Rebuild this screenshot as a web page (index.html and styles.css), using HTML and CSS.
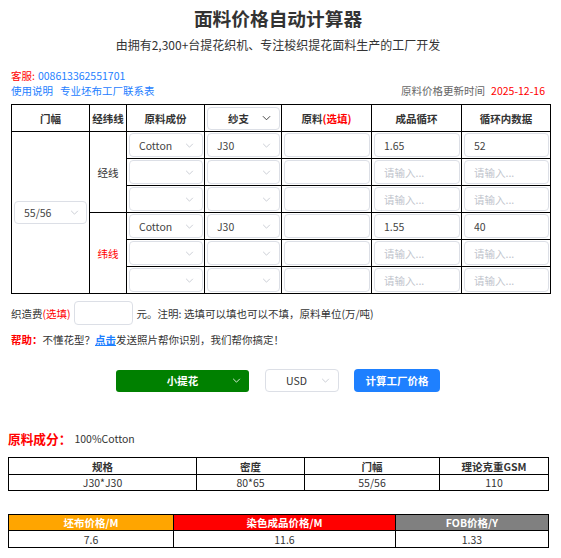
FILE: index.html
```html
<!DOCTYPE html>
<html lang="zh-CN">
<head>
<meta charset="utf-8">
<title>面料价格自动计算器</title>
<link rel="stylesheet" href="styles.css">
</head>
<body>
<div class="page">
  <h1 class="title">面料价格自动计算器</h1>
  <p class="subtitle">由拥有2,300+台提花织机、专注梭织提花面料生产的工厂开发</p>

  <div class="info">
    <div class="line"><span class="red">客服:</span> <span class="blue">008613362551701</span></div>
    <div class="line between">
      <div class="links"><span class="blue">使用说明</span><span class="blue">专业坯布工厂联系表</span></div>
      <div class="update"><span class="gray">原料价格更新时间</span><span class="red">2025-12-16</span></div>
    </div>
  </div>

  <table class="calc">
    <colgroup>
      <col class="c1"><col class="c2"><col class="c3"><col class="c4"><col class="c5"><col class="c6"><col class="c7">
    </colgroup>
    <thead>
      <tr>
        <th>门幅</th>
        <th>经纬线</th>
        <th>原料成份</th>
        <th class="pad"><div class="sel head-sel"><span>纱支</span><svg class="chev" viewBox="0 0 10 6" width="9" height="6"><polyline points="1,1 5,5 9,1" fill="none" stroke="#333" stroke-width="1"/></svg></div></th>
        <th>原料<span class="red">(选填)</span></th>
        <th>成品循环</th>
        <th>循环内数据</th>
      </tr>
    </thead>
    <tbody>
      <tr>
        <td rowspan="6" class="pad2"><div class="sel width-sel"><span>55/56</span><svg class="chev" viewBox="0 0 10 6" width="9" height="5"><polyline points="1,1 5,5 9,1" fill="none" stroke="#c0c4cc" stroke-width="1"/></svg></div></td>
        <td rowspan="3" class="side">经线</td>
        <td class="pad"><div class="sel"><span>Cotton</span><svg class="chev" viewBox="0 0 10 6" width="9" height="5"><polyline points="1,1 5,5 9,1" fill="none" stroke="#c0c4cc" stroke-width="1"/></svg></div></td>
        <td class="pad"><div class="sel"><span>J30</span><svg class="chev" viewBox="0 0 10 6" width="9" height="5"><polyline points="1,1 5,5 9,1" fill="none" stroke="#c0c4cc" stroke-width="1"/></svg></div></td>
        <td class="pad"><input class="inp" type="text"></td>
        <td class="pad"><input class="inp" type="text" value="1.65"></td>
        <td class="pad"><input class="inp" type="text" value="52"></td>
      </tr>
      <tr>
        <td class="pad"><div class="sel"><span></span><svg class="chev" viewBox="0 0 10 6" width="9" height="5"><polyline points="1,1 5,5 9,1" fill="none" stroke="#c0c4cc" stroke-width="1"/></svg></div></td>
        <td class="pad"><div class="sel"><span></span><svg class="chev" viewBox="0 0 10 6" width="9" height="5"><polyline points="1,1 5,5 9,1" fill="none" stroke="#c0c4cc" stroke-width="1"/></svg></div></td>
        <td class="pad"><input class="inp" type="text"></td>
        <td class="pad"><input class="inp" type="text" placeholder="请输入..."></td>
        <td class="pad"><input class="inp" type="text" placeholder="请输入..."></td>
      </tr>
      <tr>
        <td class="pad"><div class="sel"><span></span><svg class="chev" viewBox="0 0 10 6" width="9" height="5"><polyline points="1,1 5,5 9,1" fill="none" stroke="#c0c4cc" stroke-width="1"/></svg></div></td>
        <td class="pad"><div class="sel"><span></span><svg class="chev" viewBox="0 0 10 6" width="9" height="5"><polyline points="1,1 5,5 9,1" fill="none" stroke="#c0c4cc" stroke-width="1"/></svg></div></td>
        <td class="pad"><input class="inp" type="text"></td>
        <td class="pad"><input class="inp" type="text" placeholder="请输入..."></td>
        <td class="pad"><input class="inp" type="text" placeholder="请输入..."></td>
      </tr>
      <tr>
        <td rowspan="3" class="side red">纬线</td>
        <td class="pad"><div class="sel"><span>Cotton</span><svg class="chev" viewBox="0 0 10 6" width="9" height="5"><polyline points="1,1 5,5 9,1" fill="none" stroke="#c0c4cc" stroke-width="1"/></svg></div></td>
        <td class="pad"><div class="sel"><span>J30</span><svg class="chev" viewBox="0 0 10 6" width="9" height="5"><polyline points="1,1 5,5 9,1" fill="none" stroke="#c0c4cc" stroke-width="1"/></svg></div></td>
        <td class="pad"><input class="inp" type="text"></td>
        <td class="pad"><input class="inp" type="text" value="1.55"></td>
        <td class="pad"><input class="inp" type="text" value="40"></td>
      </tr>
      <tr>
        <td class="pad"><div class="sel"><span></span><svg class="chev" viewBox="0 0 10 6" width="9" height="5"><polyline points="1,1 5,5 9,1" fill="none" stroke="#c0c4cc" stroke-width="1"/></svg></div></td>
        <td class="pad"><div class="sel"><span></span><svg class="chev" viewBox="0 0 10 6" width="9" height="5"><polyline points="1,1 5,5 9,1" fill="none" stroke="#c0c4cc" stroke-width="1"/></svg></div></td>
        <td class="pad"><input class="inp" type="text"></td>
        <td class="pad"><input class="inp" type="text" placeholder="请输入..."></td>
        <td class="pad"><input class="inp" type="text" placeholder="请输入..."></td>
      </tr>
      <tr>
        <td class="pad"><div class="sel"><span></span><svg class="chev" viewBox="0 0 10 6" width="9" height="5"><polyline points="1,1 5,5 9,1" fill="none" stroke="#c0c4cc" stroke-width="1"/></svg></div></td>
        <td class="pad"><div class="sel"><span></span><svg class="chev" viewBox="0 0 10 6" width="9" height="5"><polyline points="1,1 5,5 9,1" fill="none" stroke="#c0c4cc" stroke-width="1"/></svg></div></td>
        <td class="pad"><input class="inp" type="text"></td>
        <td class="pad"><input class="inp" type="text" placeholder="请输入..."></td>
        <td class="pad"><input class="inp" type="text" placeholder="请输入..."></td>
      </tr>
    </tbody>
  </table>

  <div class="fee">
    <span class="fee-label">织造费<span class="red">(选填)</span></span>
    <input class="fee-inp" type="text">
    <span class="fee-note">元。注明: 选填可以填也可以不填，原料单位(万/吨)</span>
  </div>

  <div class="help"><b class="red">帮助：</b>不懂花型？<a class="click">点击</a>发送照片帮你识别，我们帮你搞定！</div>

  <div class="actions">
    <div class="type-sel"><span>小提花</span><svg class="chev" viewBox="0 0 10 6" width="9" height="5"><polyline points="1,1 5,5 9,1" fill="none" stroke="#fff" stroke-width="1"/></svg></div>
    <div class="cur-sel"><span>USD</span><svg class="chev" viewBox="0 0 10 6" width="9" height="5"><polyline points="1,1 5,5 9,1" fill="none" stroke="#c0c4cc" stroke-width="1"/></svg></div>
    <button class="calc-btn" type="button">计算工厂价格</button>
  </div>

  <div class="material"><span class="mat-label">原料成分：</span><span class="mat-val">100%Cotton</span></div>

  <table class="spec">
    <colgroup><col class="s1"><col class="s2"><col class="s3"><col class="s4"></colgroup>
    <tr><th>规格</th><th>密度</th><th>门幅</th><th>理论克重GSM</th></tr>
    <tr><td>J30*J30</td><td>80*65</td><td>55/56</td><td>110</td></tr>
  </table>

  <table class="price">
    <colgroup><col class="p1"><col class="p2"><col class="p3"></colgroup>
    <tr><th class="orange">坯布价格/M</th><th class="redbg">染色成品价格/M</th><th class="graybg">FOB价格/Y</th></tr>
    <tr><td>7.6</td><td>11.6</td><td>1.33</td></tr>
  </table>
</div>
</body>
</html>
```

FILE: styles.css
```css
* { box-sizing: border-box; }

body {
  margin: 0;
  background: #fff;
  font-family: "Microsoft YaHei", "Noto Sans CJK SC", sans-serif;
  font-size: 10.5px;
  color: #333;
}

.page {
  width: 540px;
  margin-left: 8px;
  padding-top: 7px;
}

.title {
  margin: 0;
  font-size: 18.7px;
  line-height: 22px;
  font-weight: bold;
  text-align: center;
  color: #333;
}

.subtitle {
  margin: 8px 0 0;
  font-size: 12px;
  line-height: 16px;
  text-align: center;
  color: #333;
}

.info {
  margin-top: 15px;
  padding-left: 3px;
}

.line {
  line-height: 15px;
  display: flex;
  align-items: center;
}
.line .red { margin-right: 3px; }

.between { justify-content: space-between; }

.links { display: flex; gap: 7px; }
.update { display: flex; gap: 6px; }

.red { color: #f00; }
.blue { color: #1e80ff; }
.gray { color: #666; }

.calc {
  margin-top: 6px;
  margin-left: 3px;
  width: 539px;
  border-collapse: collapse;
  table-layout: fixed;
}
.c1 { width: 78px; }
.c2 { width: 37px; }
.c3 { width: 78px; }
.c4 { width: 77px; }
.c5 { width: 90px; }
.c6 { width: 90px; }
.c7 { width: 89px; }

.calc th, .calc td {
  border: 1px solid #000;
  height: 27px;
  padding: 0;
  text-align: center;
  vertical-align: middle;
}
.calc th {
  font-weight: bold;
  color: #333;
}
.calc th .red { font-weight: bold; }

.calc td.pad, .calc th.pad {
  padding: 1px 1px 1px 2px;
}
.calc td.pad2 {
  padding: 0 2px;
}

.side { color: #333; }
.side.red { color: #f00; }

.sel {
  height: 24px;
  border: 1px solid #dcdfe6;
  border-radius: 4px;
  display: flex;
  align-items: center;
  justify-content: space-between;
  padding: 0 8px 0 9px;
  color: #444;
  background: #fff;
  text-align: left;
}
.chev { display: block; flex: none; }

.head-sel {
  height: 23px;
  padding: 0 8px 0 20px;
}
.head-sel span {
  font-weight: bold;
  color: #333;
}

.width-sel {
  height: 23px;
  padding: 0 7px 0 9px;
}

.inp {
  display: block;
  width: 100%;
  height: 24px;
  margin: 0;
  border: 1px solid #dcdfe6;
  border-radius: 4px;
  padding: 0 9px;
  font: inherit;
  color: #444;
  background: #fff;
  outline: none;
}
.inp::placeholder { color: #c0c4cc; }

.fee {
  margin-top: 7px;
  padding-left: 3px;
  display: flex;
  align-items: center;
  height: 24px;
}
.fee-label { color: #333; }
.fee-inp {
  width: 59px;
  height: 24px;
  margin: 0 4px 0 3px;
  border: 1px solid #dcdfe6;
  border-radius: 4px;
  font: inherit;
  padding: 0 8px;
  outline: none;
}
.fee-note { color: #333; }

.help {
  margin-top: 7px;
  padding-left: 3px;
  line-height: 15px;
  color: #333;
}
.help b { font-weight: bold; }
.click {
  color: #1e80ff;
  font-weight: bold;
  text-decoration: underline;
}

.actions {
  margin-top: 22px;
  display: flex;
  justify-content: center;
  align-items: center;
  gap: 16px;
}

.type-sel {
  width: 133px;
  height: 22px;
  background: #008000;
  border-radius: 3px;
  color: #fff;
  font-weight: bold;
  display: flex;
  align-items: center;
  position: relative;
  justify-content: center;
}
.type-sel .chev {
  position: absolute;
  right: 8px;
  top: 8px;
}

.cur-sel {
  width: 74px;
  height: 23px;
  border: 1px solid #dcdfe6;
  border-radius: 4px;
  display: flex;
  align-items: center;
  justify-content: space-between;
  padding: 0 8px 0 20px;
  color: #333;
}

.calc-btn {
  width: 86px;
  height: 23px;
  border: none;
  border-radius: 4px;
  background: #1e80ff;
  color: #fff;
  font: inherit;
  font-weight: bold;
  padding: 0;
  margin-left: -1px;
}

.material {
  margin-top: 37px;
  display: flex;
  align-items: center;
  height: 18px;
}
.mat-label {
  font-size: 12.7px;
  font-weight: bold;
  color: #f00;
}
.mat-val {
  margin-left: 3px;
  color: #333;
}

.spec, .price {
  width: 540px;
  border-collapse: collapse;
  table-layout: fixed;
}
.spec { margin-top: 10px; }
.price { margin-top: 23px; }

.s1 { width: 188px; }
.s2 { width: 108px; }
.s3 { width: 135px; }
.s4 { width: 109px; }

.p1 { width: 165px; }
.p2 { width: 222px; }
.p3 { width: 153px; }

.spec th, .spec td, .price th, .price td {
  border: 1px solid #000;
  padding: 0;
  text-align: center;
  line-height: 15px;
  color: #333;
}
.spec th {
  height: 17px;
  font-weight: bold;
}
.spec td { height: 16px; }

.price th {
  height: 16px;
  font-weight: bold;
  color: #fff;
}
.price td { height: 17px; }

.orange { background: #ffa500; }
.redbg { background: #f00; }
.graybg { background: #808080; }
```
